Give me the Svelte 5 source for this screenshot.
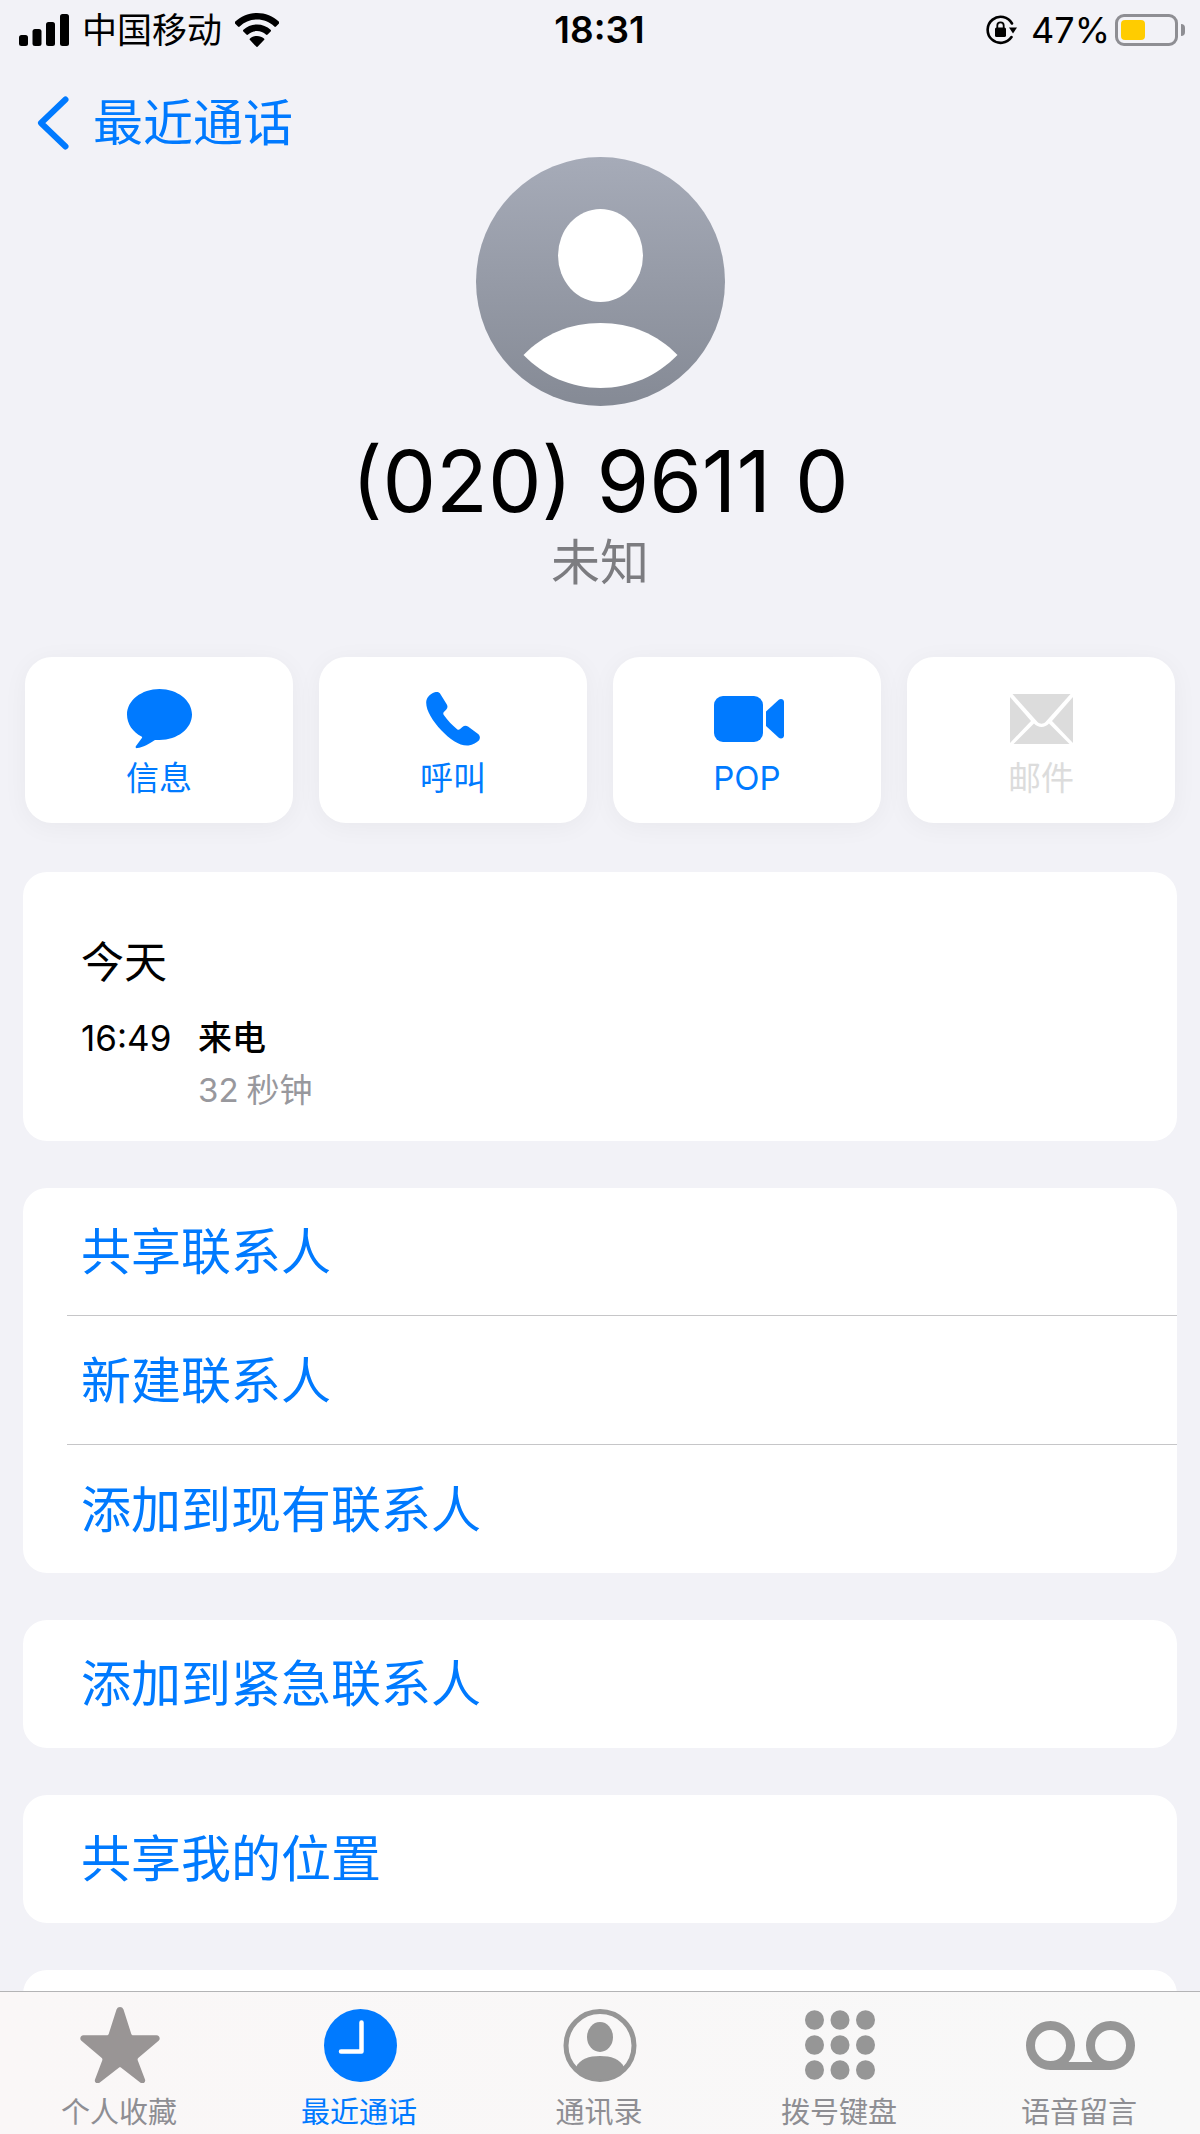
<script>
  const actions = [
    { label: '信息', kind: 'msg' },
    { label: '呼叫', kind: 'phone' },
    { label: 'POP', kind: 'video' },
    { label: '邮件', kind: 'mail', off: true }
  ];
  const groups = [
    ['共享联系人', '新建联系人', '添加到现有联系人'],
    ['添加到紧急联系人'],
    ['共享我的位置'],
    ['']
  ];
  const tabs = [
    { label: '个人收藏', kind: 'star' },
    { label: '最近通话', kind: 'clock', active: true },
    { label: '通讯录', kind: 'contacts' },
    { label: '拨号键盘', kind: 'keypad' },
    { label: '语音留言', kind: 'voicemail' }
  ];
</script>

<div class="screen">
  <div class="status">
    <div class="status-left">
      <svg class="signal" width="50" height="32" viewBox="0 0 50 32" aria-hidden="true">
        <rect x="0" y="21" width="9" height="11" rx="2.5" />
        <rect x="13.5" y="15" width="9" height="17" rx="2.5" />
        <rect x="27" y="8" width="9" height="24" rx="2.5" />
        <rect x="41" y="0" width="9" height="32" rx="2.5" />
      </svg>
      <span class="carrier">中国移动</span>
      <svg class="wifi" width="44" height="34" viewBox="0 0 44 34" aria-hidden="true">
        <path d="M22 0C13.500 0 6 3.300 0 8.800a1.200 1.200 0 0 0 0 1.700l3 3a1.200 1.200 0 0 0 1.700 0C9.400 9.200 15.400 6.600 22 6.600s12.600 2.600 17.300 6.900a1.200 1.200 0 0 0 1.700 0l3-3a1.200 1.200 0 0 0 0-1.700C38 3.300 30.500 0 22 0z" />
        <path d="M22 11.500c-5.300 0-10 2-13.600 5.300a1.200 1.200 0 0 0 0 1.700l3 3a1.200 1.200 0 0 0 1.700 0c2.400-2.100 5.500-3.400 8.900-3.400s6.500 1.300 8.900 3.400a1.200 1.200 0 0 0 1.700 0l3-3a1.200 1.200 0 0 0 0-1.700C32 13.500 27.300 11.500 22 11.500z" />
        <path d="M22 23c-2.800 0-5.200 1-7 2.600a1 1 0 0 0 0 1.500l6.200 6.500a1.100 1.100 0 0 0 1.600 0l6.200-6.500a1 1 0 0 0 0-1.500C27.200 24 24.800 23 22 23z" />
      </svg>
    </div>
    <span class="time">18:31</span>
    <div class="status-right">
      <svg width="31" height="30" viewBox="0 0 31 30" aria-hidden="true">
        <path d="M26 8.500A13 13 0 1 0 25.500 22" fill="none" stroke="#000" stroke-width="2.600" stroke-linecap="round" />
        <path d="M23 12.500h8l-4 6z" />
        <rect x="9" y="12.500" width="11" height="9.500" rx="1.600" />
        <path d="M11.300 13V10.500a3.200 3.200 0 0 1 6.400 0V13" fill="none" stroke="#000" stroke-width="1.800" />
      </svg>
      <span class="percent">47%</span>
      <div class="battery"><div class="battery-fill"></div></div>
      <div class="battery-nub"></div>
    </div>
  </div>

  <div class="nav">
    <svg width="34" height="56" viewBox="0 0 34 56" aria-hidden="true">
      <path d="M29.500 4.500 5 28l24.500 23.500" fill="none" stroke="#007aff" stroke-width="6" stroke-linecap="round" stroke-linejoin="round" />
    </svg>
    <span>最近通话</span>
  </div>

  <div class="hero">
    <svg class="avatar" width="249" height="249" viewBox="0 0 249 249" aria-hidden="true">
      <defs>
        <linearGradient id="avatar-fill" x1="0" y1="0" x2="0" y2="1">
          <stop offset="0" stop-color="#a6abb8" />
          <stop offset="1" stop-color="#858a95" />
        </linearGradient>
      </defs>
      <circle cx="124.500" cy="124.500" r="124.500" fill="url(#avatar-fill)" />
      <ellipse cx="124.500" cy="98.500" rx="42.500" ry="46.500" fill="#fff" />
      <path d="M47.500 198C68 177 94 166 124.500 166S181 177 201.500 198C181 219 154 231 124.500 231S68 219 47.500 198z" fill="#fff" />
    </svg>
    <div class="name">(020) 9611 0</div>
    <div class="sub">未知</div>
  </div>

  <div class="actions">
    {#each actions as a}
      <div class="action" class:off={a.off}>
        <div class="action-icon">
          {#if a.kind === 'msg'}
            <svg width="65" height="60" viewBox="0 0 65 60" aria-hidden="true">
              <path d="M32.500 0C14.500 0 0 11.500 0 25.500c0 9.500 5.800 17.500 14.500 22 .7.400.8 1 .4 1.600L9 57c-.9 1.300-.2 2.300 1.300 2.100 5.500-.8 12.500-4.300 17.200-7.800.4-.200.9-.3 1.500-.3H32.500C50.500 51 65 39.500 65 25.500S50.500 0 32.500 0z" fill="#007aff" />
            </svg>
          {:else if a.kind === 'phone'}
            <svg width="54" height="54" viewBox="0 0 54 54" aria-hidden="true">
              <path d="M8 .6c2.600-1.300 5-.8 6.500 1.600l6.200 10c1.200 2 1 4-.6 5.600l-2 2c-1 1-1.100 2-.3 3.200 4 5.600 8.300 10.200 13.300 14.200 1 .8 2 .8 3-.1l2.300-2.100c1.700-1.500 3.700-1.800 5.600-.5l9.800 7.300c2.200 1.700 2.700 4 1.300 6.400C50.500 50.500 47 53 42.500 53.500 34 54.300 24 47.600 15.500 38.500 6.500 28.800 0 18.400.2 10.300.3 6 3.500 2.600 8 .6z" fill="#007aff" />
            </svg>
          {:else if a.kind === 'video'}
            <svg class="video-icon" width="70" height="46" viewBox="0 0 70 46" aria-hidden="true">
              <rect x="0" y="0" width="49" height="46" rx="9" fill="#007aff" />
              <path d="M52 15.500 64.500 4c2-1.700 5.500-1 5.500 2v33.500c0 3-3.400 3.800-5.500 2L52 30z" fill="#007aff" />
            </svg>
          {:else}
            <svg width="63" height="50" viewBox="0 0 63 50" aria-hidden="true">
              <path d="M2.500 0h58L35.500 28c-2.200 2.200-5.800 2.200-8 0z" fill="#dcdcdc" />
              <path d="M0 3 21 27 0 49z" fill="#dcdcdc" />
              <path d="M63 3 42 27l21 22z" fill="#dcdcdc" />
              <path d="M3.500 50 24 29.500c4 4.500 11 4.500 15 0L59.500 50z" fill="#dcdcdc" />
            </svg>
          {/if}
        </div>
        <span class="action-label">{a.label}</span>
      </div>
    {/each}
  </div>

  <div class="card call">
    <div class="call-day">今天</div>
    <div class="call-row">
      <span class="call-time">16:49</span>
      <div>
        <div class="call-type">来电</div>
        <div class="call-length">32<span class="unit">秒钟</span></div>
      </div>
    </div>
  </div>

  {#each groups as rows}
    <div class="card list">
      {#each rows as row, i}
        <div class="row" class:first={i === 0} class:stacked={rows.length > 1}>{row}</div>
      {/each}
    </div>
  {/each}

  <div class="tabbar">
    {#each tabs as t}
      <div class="tab" class:active={t.active}>
        <div class="tab-icon">
          {#if t.kind === 'star'}
            <svg width="80" height="76" viewBox="0 0 80 76" aria-hidden="true">
              <path d="M36.500 2.500c1.300-3.300 5.700-3.300 7 0l7.800 24.500c.3.800 1 1.300 1.900 1.300h23.300c3 0 4.300 3.600 2.100 5.500L58.500 50.800c-.8.600-1.100 1.500-.8 2.400l7.300 19.300c1 2.700-2 5-4.500 3.300L41.200 60.700c-.8-.5-1.600-.5-2.400 0L19.500 75.800c-2.500 1.700-5.500-.6-4.500-3.300l7.300-19.300c.3-.9 0-1.800-.8-2.400L1.400 33.800c-2.200-1.900-.9-5.500 2.100-5.500h23.300c.9 0 1.600-.5 1.900-1.300z" fill="#999595" />
            </svg>
          {:else if t.kind === 'clock'}
            <svg width="73" height="73" viewBox="0 0 73 73" aria-hidden="true">
              <circle cx="36.500" cy="36.500" r="36.500" fill="#007aff" />
              <path d="M37.500 13.500V42.500H17" fill="none" stroke="#fff" stroke-width="4.500" stroke-linecap="round" stroke-linejoin="round" />
            </svg>
          {:else if t.kind === 'contacts'}
            <svg width="74" height="73" viewBox="0 0 74 73" aria-hidden="true">
              <circle cx="37" cy="36.500" r="34" fill="none" stroke="#969696" stroke-width="5" />
              <ellipse cx="37" cy="28" rx="13" ry="15" fill="#969696" />
              <path d="M13 58c4-8 13-11 24-11s20 3 24 11C55 66 46 71 37 71S19 66 13 58z" fill="#969696" />
            </svg>
          {:else if t.kind === 'keypad'}
            <svg width="70" height="70" viewBox="0 0 70 70" aria-hidden="true">
              {#each [0, 1, 2] as r}
                {#each [0, 1, 2] as c}
                  <ellipse cx={9.500 + c * 25.500} cy={10 + r * 25} rx="9.500" ry="9.800" fill="#969696" />
                {/each}
              {/each}
            </svg>
          {:else}
            <svg width="109" height="49" viewBox="0 0 109 49" aria-hidden="true">
              <circle cx="24.500" cy="24.500" r="20" fill="none" stroke="#969696" stroke-width="9" />
              <circle cx="84.500" cy="24.500" r="20" fill="none" stroke="#969696" stroke-width="9" />
              <rect x="24" y="41" width="61" height="8" fill="#969696" />
            </svg>
          {/if}
        </div>
        <span class="tab-label">{t.label}</span>
      </div>
    {/each}
  </div>
</div>

<style>
  :global(body) {
    margin: 0;
    background: #f2f2f7;
  }

  .screen {
    position: relative;
    width: 1200px;
    height: 2134px;
    overflow: hidden;
    background: #f2f2f7;
    font-family: Inter, "Noto Sans CJK SC", sans-serif;
    color: #000;
  }

  .status {
    display: flex;
    align-items: center;
    justify-content: space-between;
    height: 60px;
    padding: 0 15px 0 19px;
  }

  .status-left {
    display: flex;
    flex: 1;
    align-items: center;
    gap: 13px;
  }

  .signal {
    width: 50px;
    height: 32px;
  }

  .carrier {
    font-size: 35px;
    line-height: 40px;
  }

  .time {
    margin-left: -5px;
    font-size: 37px;
    font-weight: 600;
    line-height: 40px;
  }

  .status-right {
    display: flex;
    flex: 1;
    align-items: center;
    justify-content: flex-end;
  }

  .percent {
    margin: 0 5px 0 14px;
    font-size: 36px;
    line-height: 40px;
  }

  .battery {
    box-sizing: border-box;
    width: 63px;
    height: 32px;
    padding: 3px;
    border: 3px solid #8e8e93;
    border-radius: 9px;
  }

  .battery-fill {
    width: 24px;
    height: 100%;
    background: #ffcc00;
    border-radius: 4px;
  }

  .battery-nub {
    width: 4px;
    height: 12px;
    margin-left: 3px;
    background: #8e8e93;
    border-radius: 0 4px 4px 0;
  }

  .nav {
    display: flex;
    align-items: center;
    gap: 23px;
    height: 64px;
    margin-top: 31px;
    padding-left: 36px;
    color: #007aff;
    font-size: 50px;
    line-height: 64px;
  }

  .hero {
    display: flex;
    flex-direction: column;
    align-items: center;
    margin-top: 2px;
  }

  .avatar {
    display: block;
  }

  .name {
    margin-top: 26px;
    font-size: 85px;
    line-height: 100px;
    white-space: pre;
  }

  .sub {
    margin-top: 1px;
    color: #7c7c80;
    font-size: 49px;
    line-height: 60px;
  }

  .actions {
    display: grid;
    grid-template-columns: repeat(4, 268px);
    gap: 26px;
    margin: 64px 0 0 25px;
  }

  .action {
    display: flex;
    flex-direction: column;
    align-items: center;
    height: 166px;
    color: #007aff;
    background: #fff;
    border-radius: 27px;
    box-shadow: 0 4px 26px rgba(0, 0, 30, 0.045);
  }

  .action.off {
    color: #dcdcdc;
  }

  .action-icon {
    display: flex;
    align-items: center;
    justify-content: center;
    height: 60px;
    margin-top: 32px;
  }

  .video-icon {
    margin-left: 3px;
  }

  .action-label {
    margin-top: 9px;
    font-size: 33px;
    line-height: 40px;
  }

  .card {
    margin: 47px 23px 0;
    background: #fff;
    border-radius: 24px;
  }

  .call {
    box-sizing: border-box;
    height: 269px;
    margin-top: 49px;
    padding: 60px 58px 0;
  }

  .call-day {
    font-size: 43px;
    line-height: 60px;
  }

  .call-row {
    display: flex;
    margin-top: 23px;
  }

  .call-time {
    width: 117px;
    font-size: 35px;
    line-height: 46px;
  }

  .call-type {
    font-size: 34px;
    font-weight: 500;
    line-height: 46px;
  }

  .call-length {
    margin-top: 6px;
    color: #98989d;
    font-size: 33px;
    line-height: 46px;
  }

  .unit {
    margin-left: 8px;
  }

  .list {
    overflow: hidden;
  }

  .row {
    height: 128px;
    margin-left: 44px;
    padding-left: 14px;
    border-top: 1px solid #c6c6c8;
    color: #007aff;
    font-size: 50px;
    line-height: 130px;
  }

  .row.first {
    border-top: 0;
    line-height: 128px;
  }

  .row.first.stacked {
    height: 127px;
  }

  .tabbar {
    position: absolute;
    right: 0;
    bottom: 0;
    left: 0;
    display: grid;
    grid-template-columns: repeat(5, 1fr);
    height: 142px;
    background: linear-gradient(90deg, #faf7f7, #f8f8f8);
    border-top: 1px solid #b4b4b6;
  }

  .tab {
    display: flex;
    flex-direction: column;
    align-items: center;
    color: #8e8e93;
  }

  .tab.active {
    color: #007aff;
  }

  .tab-icon {
    display: flex;
    align-items: center;
    justify-content: center;
    height: 78px;
    margin-top: 14px;
  }

  .tab-label {
    margin-top: 9px;
    margin-right: 2px;
    font-size: 29px;
    line-height: 40px;
  }
</style>
